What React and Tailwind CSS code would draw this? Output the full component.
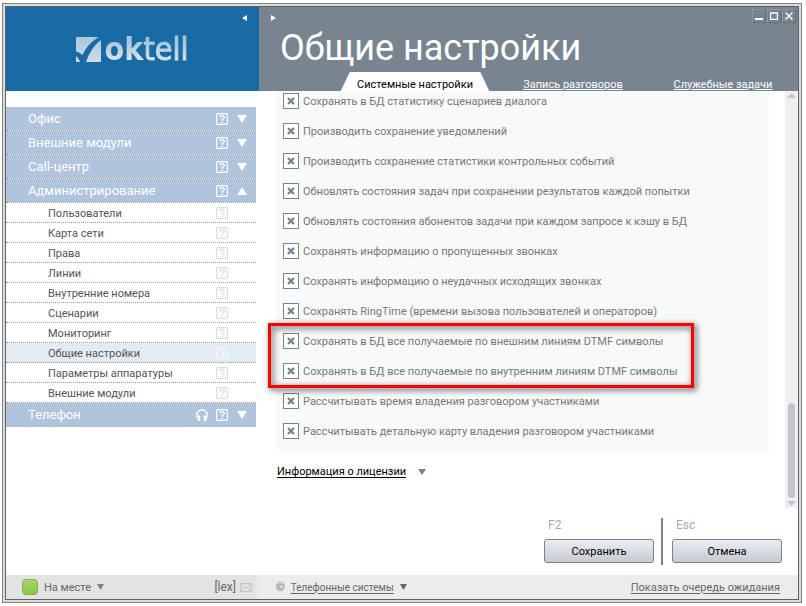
import React, { useState } from 'react';

const GROUPS = [
  { id: 'office', title: 'Офис' },
  { id: 'external', title: 'Внешние модули' },
  { id: 'callcenter', title: 'Call-центр' },
  {
    id: 'admin',
    title: 'Администрирование',
    items: [
      'Пользователи',
      'Карта сети',
      'Права',
      'Линии',
      'Внутренние номера',
      'Сценарии',
      'Мониторинг',
      'Общие настройки',
      'Параметры аппаратуры',
      'Внешние модули',
    ],
  },
  { id: 'phone', title: 'Телефон', headset: true },
];

const OPTIONS_TOP = [
  'Сохранять в БД статистику сценариев диалога',
  'Производить сохранение уведомлений',
  'Производить сохранение статистики контрольных событий',
  'Обновлять состояния задач при сохранении результатов каждой попытки',
  'Обновлять состояния абонентов задачи при каждом запросе к кэшу в БД',
  'Сохранять информацию о пропущенных звонках',
  'Сохранять информацию о неудачных исходящих звонках',
  'Сохранять RingTime (времени вызова пользователей и операторов)',
];

const OPTIONS_DTMF = [
  'Сохранять в БД все получаемые по внешним линиям DTMF символы',
  'Сохранять в БД все получаемые по внутренним линиям DTMF символы',
];

const OPTIONS_BOTTOM = [
  'Рассчитывать время владения разговором участниками',
  'Рассчитывать детальную карту владения разговором участниками',
];

function Triangle({ dir = 'down', className }) {
  const points = {
    down: '0,0 10,0 5,9',
    up: '0,9 10,9 5,0',
    left: '10,0 10,9 0,4.5',
    right: '0,0 10,4.5 0,9',
  };
  return (
    <svg viewBox="0 0 10 9" preserveAspectRatio="none" className={className} fill="currentColor" aria-hidden="true">
      <polygon points={points[dir]} />
    </svg>
  );
}

function HelpIcon({ className }) {
  return (
    <svg viewBox="0 0 12 12" className={className} fill="none" stroke="currentColor" aria-hidden="true">
      <rect x="0.6" y="0.6" width="10.8" height="10.8" rx="1.2" strokeWidth="1.2" />
      <path d="M4 4.8V3.5L4.8 2.7H7.3L8.2 3.5V5L6.3 6.6V7.8M6.3 8.6V9.9" strokeWidth="1.2" />
    </svg>
  );
}

function HeadsetIcon({ className }) {
  return (
    <svg viewBox="0 0 12 12" className={className} aria-hidden="true">
      <path d="M0.9 8.5V5.6a5.1 4.9 0 0 1 10.2 0V8.5" fill="none" stroke="currentColor" strokeWidth="1.4" />
      <rect x="1.6" y="6.5" width="2.6" height="5.5" rx="1" fill="currentColor" />
      <rect x="7.8" y="6.5" width="2.6" height="5.5" rx="1" fill="currentColor" />
    </svg>
  );
}

function Logo() {
  return (
    <div className="flex items-center gap-1">
      <svg viewBox="0 0 25 25" className="size-[25px]" aria-hidden="true">
        <defs>
          <linearGradient id="mark" x1="0" y1="0" x2="0" y2="1">
            <stop offset="0" stopColor="#a6c8de" />
            <stop offset="1" stopColor="#d3dbe4" />
          </linearGradient>
        </defs>
        <path
          d="M0 0H23C16 4 10 10 6.5 18C4.5 16 2.5 15 0 14.5ZM25 3V25H10C13 16 18 8 25 3ZM0 19C2 20.5 3.3 22.5 4 25H0Z"
          fill="url(#mark)"
        />
      </svg>
      <span className="bg-gradient-to-b from-[#a6c8de] from-30% to-[#dde2e8] to-80% bg-clip-text font-['DejaVu_Sans_Condensed','DejaVu_Sans',sans-serif] text-[32px] leading-9 text-transparent">
        <b>ok</b>
        <span className="[-webkit-text-stroke:1px_transparent]">tell</span>
      </span>
    </div>
  );
}

function Option({ label }) {
  const [checked, setChecked] = useState(true);
  return (
    <label className="flex h-[30px] items-center gap-1 whitespace-nowrap">
      <span className="grid size-4 place-items-center">
        <input
          type="checkbox"
          checked={checked}
          onChange={(e) => setChecked(e.target.checked)}
          className="col-start-1 row-start-1 size-4 appearance-none border border-[#768390] bg-white"
        />
        {checked && (
          <svg viewBox="0 0 8 8" className="pointer-events-none col-start-1 row-start-1 size-2" aria-hidden="true">
            <path d="M1 1L7 7M7 1L1 7" stroke="#768390" strokeWidth="2.3" />
          </svg>
        )}
      </span>
      {label}
    </label>
  );
}

function NavGroup({ group, open, onToggle, current, onSelect }) {
  return (
    <li className="group">
      <div className="flex h-6 items-center border-b border-dotted border-[#999] bg-[#b0c4de] bg-clip-padding pr-2 pl-[22px] text-white group-last:border-b-0 group-last:pb-px">
        <button type="button" onClick={onToggle} className="flex-1 text-left text-[13px]">
          {group.title}
        </button>
        {group.headset && <HeadsetIcon className="mr-2 size-3" />}
        <HelpIcon className="mr-2 size-3" />
        <Triangle dir={open ? 'up' : 'down'} className="mx-px h-2 w-2.5" />
      </div>
      {open && group.items && (
        <ul>
          {group.items.map((item) => (
            <li
              key={item}
              className={
                'flex h-5 items-center border-b border-dotted border-[#999] pr-7 pl-[42px] ' +
                (item === current ? 'bg-[#e3ebf3] text-[#f4f8fb]' : 'text-[#d3e0e6]')
              }
            >
              <a
                href="#"
                onClick={(e) => {
                  e.preventDefault();
                  onSelect(item);
                }}
                className="flex-1 pt-0.5 text-[#555]"
              >
                {item}
              </a>
              <HelpIcon className="size-3" />
            </li>
          ))}
        </ul>
      )}
    </li>
  );
}

function WindowButton({ label, children }) {
  return (
    <button
      type="button"
      aria-label={label}
      className="grid size-3.5 place-items-center border border-t-[#8a96a1] border-r-[#65717d] border-b-[#65717d] border-l-[#8a96a1]"
    >
      <svg viewBox="0 0 8 8" className="size-2" fill="none" stroke="#fff" aria-hidden="true">
        {children}
      </svg>
    </button>
  );
}

export default function App() {
  const [openGroup, setOpenGroup] = useState('admin');
  const [current, setCurrent] = useState('Общие настройки');

  return (
    <div className="flex h-screen flex-col bg-white pt-[3px] pr-1 pb-[3px] pl-0.5 font-[Roboto,sans-serif] text-[11px] leading-[17px] text-[#777]">
      <div className="flex min-h-0 flex-1 border border-[#808080] bg-[#dcdcdc] p-0.5">
        <div className="flex min-h-0 min-w-0 flex-1 flex-col border border-[#606060] bg-white">
          <header className="flex h-[84px] shrink-0 text-white">
            <div className="flex w-[253px] items-start bg-[#196ba6]">
              <div className="flex flex-1 justify-center pt-6 pl-4">
                <Logo />
              </div>
              <button type="button" aria-label="Свернуть меню" className="mt-2 mr-3">
                <Triangle dir="left" className="h-1.5 w-[5px]" />
              </button>
            </div>
            <div className="flex min-w-0 flex-1 flex-col bg-[#788590]">
              <div className="flex justify-between pr-0.5 pl-3">
                <button type="button" aria-label="Развернуть" className="mt-2 h-1.5">
                  <Triangle dir="right" className="h-1.5 w-[5px]" />
                </button>
                <div className="flex gap-px pt-0.5">
                  <WindowButton label="Свернуть">
                    <path d="M0 7H8" strokeWidth="2" />
                  </WindowButton>
                  <WindowButton label="Развернуть окно">
                    <path d="M0.5 1V7.5H7.5V1M0 1H8" strokeWidth="1.4" />
                  </WindowButton>
                  <WindowButton label="Закрыть">
                    <path d="M0.5 0.5L7.5 7.5M7.5 0.5L0.5 7.5" strokeWidth="1.4" />
                  </WindowButton>
                </div>
              </div>
              <h1 className="flex-1 pl-[21px] text-[36px] leading-[50px]">Общие настройки</h1>
              <nav className="flex h-[18px] items-center pl-[81px] text-center">
                <a
                  href="#"
                  className="mr-2 w-[150px] bg-white pt-1 text-black [clip-path:polygon(10px_0,calc(100%-10px)_0,100%_100%,0_100%)]"
                >
                  Системные настройки
                </a>
                <a href="#" className="w-[150px] pt-1 underline underline-offset-1">
                  Запись разговоров
                </a>
                <a href="#" className="w-[150px] pt-1 underline underline-offset-1">
                  Служебные задачи
                </a>
              </nav>
            </div>
          </header>

          <div className="flex min-h-0 flex-1">
            <aside className="w-[253px] shrink-0 pt-4 pr-[3px]">
              <ul>
                {GROUPS.map((group) => (
                  <NavGroup
                    key={group.id}
                    group={group}
                    open={openGroup === group.id}
                    onToggle={() => setOpenGroup(openGroup === group.id ? null : group.id)}
                    current={current}
                    onSelect={setCurrent}
                  />
                ))}
              </ul>
            </aside>

            <main className="flex min-w-0 flex-1 flex-col">
              <div className="flex min-h-0 flex-1">
                <div className="min-w-0 flex-1 overflow-hidden pr-4 pl-[17px]">
                  <div className="bg-[#f7f9fb] pb-[5px] pl-[7px]">
                    <div className="-mt-[5px]">
                      {OPTIONS_TOP.map((label) => (
                        <Option key={label} label={label} />
                      ))}
                      <div className="relative w-fit">
                        {OPTIONS_DTMF.map((label) => (
                          <Option key={label} label={label} />
                        ))}
                        <div className="pointer-events-none absolute -top-[3px] -right-[17px] -bottom-[2px] -left-[15px] border-3 border-[#f00] drop-shadow-[2px_2px_3px_rgba(0,0,0,0.8)]" />
                      </div>
                      {OPTIONS_BOTTOM.map((label) => (
                        <Option key={label} label={label} />
                      ))}
                    </div>
                  </div>
                  <div className="flex items-center gap-3 pt-3 pl-px">
                    <a href="#" className="text-black underline underline-offset-2">
                      Информация о лицензии
                    </a>
                    <Triangle className="h-1.5 w-2 text-[#768390]" />
                  </div>
                </div>
                <div className="flex w-[13px] flex-col items-center bg-[#efeff4] py-0.5 text-[#c3c4cc]">
                  <Triangle dir="up" className="h-[5px] w-[9px]" />
                  <div className="flex w-[7px] flex-1 flex-col justify-end py-[3px]">
                    <div className="h-[24%] rounded-full bg-current" />
                  </div>
                  <Triangle className="h-[5px] w-[9px]" />
                </div>
              </div>

              <div className="flex h-[67px] shrink-0 items-end justify-end gap-[7px] pr-4 pb-2.5">
                <div className="flex flex-col gap-[5px] pb-0.5">
                  <span className="pl-1 text-[12px] text-[#a3acb5]">F2</span>
                  <button
                    type="button"
                    className="h-6 w-[110px] rounded-[3px] border border-[#768390] bg-gradient-to-b from-[#eceef2] to-[#c6cad2] text-black"
                  >
                    Сохранить
                  </button>
                </div>
                <div className="mr-0.5 h-[47px] w-0.5 bg-[#768390]" />
                <div className="flex flex-col gap-[5px] pb-0.5">
                  <span className="pl-1 text-[12px] text-[#a3acb5]">Esc</span>
                  <button
                    type="button"
                    className="h-6 w-[110px] rounded-[3px] border border-[#768390] bg-gradient-to-b from-[#eceef2] to-[#c6cad2] text-black"
                  >
                    Отмена
                  </button>
                </div>
              </div>
            </main>
          </div>

          <footer className="flex h-6 shrink-0 items-stretch bg-[#ececec] text-[#666]">
            <div className="flex w-[253px] items-center border-r-3 border-[#e8e8e8] bg-[#e3e3e3] pr-1 pl-4">
              <span className="size-4 rounded-[4px] border border-[#7fb53f] bg-gradient-to-b from-[#a9d474] to-[#8cc63f]" />
              <button type="button" className="ml-1.5 flex items-center gap-1.5">
                На месте
                <Triangle className="h-1.5 w-[7px] text-[#768390]" />
              </button>
              <span className="mr-1 ml-auto text-[12px]">[lex]</span>
              <svg viewBox="0 0 12 9" className="h-[9px] w-3" fill="none" stroke="#c4c4c4" aria-hidden="true">
                <path d="M0.5 0.5H11.5V8.5H0.5ZM0.5 0.5L6 5.5L11.5 0.5M0.5 8.5L4.5 4.2M11.5 8.5L7.5 4.2" />
              </svg>
            </div>
            <div className="flex flex-1 items-center pr-[18px] pl-[17px]">
              <span className="mr-1.5">©</span>
              <a href="#" className="mr-1.5 text-[10px] underline underline-offset-2">
                Телефонные системы
              </a>
              <Triangle className="h-1.5 w-[7px]" />
              <a href="#" className="ml-auto underline underline-offset-2">
                Показать очередь ожидания
              </a>
            </div>
          </footer>
        </div>
      </div>
    </div>
  );
}
